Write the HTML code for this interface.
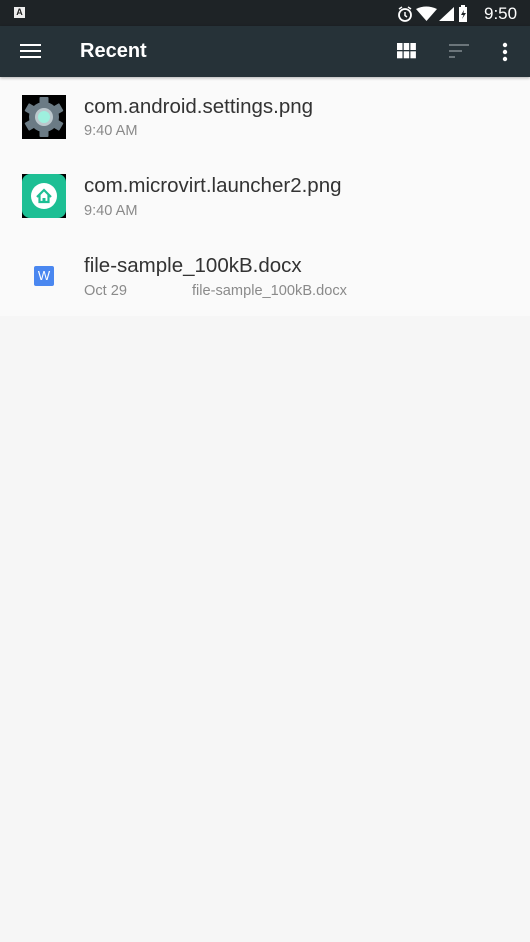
<!DOCTYPE html>
<html><head><style>
body{margin:0;width:530px;height:942px;background:#f6f6f6;font-family:"Liberation Sans",Roboto,sans-serif;position:relative;overflow:hidden}
.sb{position:absolute;left:0;top:0;width:530px;height:26px;background:#1e2326}
.tb{position:absolute;left:0;top:26px;width:530px;height:51px;background:#263238;box-shadow:0 1px 3px rgba(0,0,0,.3)}
.list{position:absolute;left:0;top:77px;width:530px;height:239px;background:#fafafa}
.t{position:absolute;left:84px;font-size:20.5px;color:#333}
.s{position:absolute;font-size:14.6px;color:#8a8a8a}
</style></head><body>
<div class="list"></div>
<div class="sb">
 <div style="position:absolute;left:14px;top:7px;width:11px;height:11px;background:#eee;font-size:9px;font-weight:bold;color:#222;text-align:center;line-height:11px">A</div>
 <svg style="position:absolute;left:396px;top:5px" width="120" height="18" viewBox="0 0 120 18">
  <circle cx="9" cy="10" r="6" fill="none" stroke="#fff" stroke-width="1.8"/><path d="M9 7v3.5l2 1.5" stroke="#fff" stroke-width="1.5" fill="none"/><path d="M3 4l3-2M15 4l-3-2" stroke="#fff" stroke-width="1.5"/>
  <path d="M20 4 Q30 -1 41 4 L30.5 16 Z" fill="#fff"/>
  <path d="M43 16 L58 2 L58 16 Z" fill="#fff"/>
  <rect x="63" y="2" width="8" height="15" fill="#fff"/><rect x="65" y="0" width="4" height="2" fill="#fff"/><path d="M68 5 L65 10 L67.5 10 L66 14 L70 8 L67.5 8 Z" fill="#1e2326"/>
 </svg>
 <div style="position:absolute;left:484px;top:4px;color:#fff;font-size:17px">9:50</div>
</div>
<div class="tb">
 <div style="position:absolute;left:20px;top:18px;width:21px;height:2px;background:#fff;box-shadow:0 6px 0 #fff,0 12px 0 #fff"></div>
 <div style="position:absolute;left:80px;top:14px;color:#fff;font-size:20px;font-weight:bold">Recent</div>
 <svg style="position:absolute;left:397px;top:17px" width="20" height="16"><g fill="#fff"><rect x="0" y="0" width="5.5" height="7"/><rect x="6.7" y="0" width="5.5" height="7"/><rect x="13.4" y="0" width="5.5" height="7"/><rect x="0" y="8.3" width="5.5" height="7"/><rect x="6.7" y="8.3" width="5.5" height="7"/><rect x="13.4" y="8.3" width="5.5" height="7"/></g></svg>
 <svg style="position:absolute;left:449px;top:18px" width="22" height="14"><g fill="#6b757a"><rect x="0" y="0" width="20" height="2"/><rect x="0" y="6" width="13" height="2"/><rect x="0" y="12" width="6" height="2"/></g></svg>
 <svg style="position:absolute;left:500px;top:16px" width="10" height="20"><g fill="#fff"><circle cx="5" cy="3" r="2.2"/><circle cx="5" cy="10" r="2.2"/><circle cx="5" cy="17" r="2.2"/></g></svg>
</div>
<svg style="position:absolute;left:22px;top:95px" width="44" height="44" viewBox="0 0 44 44">
 <rect width="44" height="44" fill="#000"/>
 <g fill="#6b7b85" transform="translate(22 22)">
  <circle r="15"/>
  <g id="g"><rect x="-4.5" y="-20" width="9" height="8" rx="1"/></g>
  <use href="#g" transform="rotate(60)"/><use href="#g" transform="rotate(120)"/><use href="#g" transform="rotate(180)"/><use href="#g" transform="rotate(240)"/><use href="#g" transform="rotate(300)"/>
 </g>
 <circle cx="22" cy="22" r="9" fill="#bcc8cd"/><circle cx="22" cy="22" r="6" fill="#9ef0de"/>
</svg>
<svg style="position:absolute;left:22px;top:174px" width="44" height="44" viewBox="0 0 44 44">
 <rect width="44" height="44" fill="#000"/><rect width="44" height="44" rx="8" fill="#1dbf94"/>
 <circle cx="22" cy="22" r="13" fill="#fff"/>
 <path d="M15 23 L22 16 L29 23 M17.5 21 V28 H26.5 V21" stroke="#1dbf94" stroke-width="2.2" fill="none"/><rect x="20.5" y="24" width="3" height="4" fill="#1dbf94"/>
</svg>
<div style="position:absolute;left:34px;top:266px;width:20px;height:20px;background:#4a87f0;border-radius:2px;color:#fff;font-size:13px;text-align:center;line-height:20px">W</div>
<div class="t" style="top:95px">com.android.settings.png</div>
<div class="s" style="left:84px;top:123px">9:40 AM</div>
<div class="t" style="top:174px">com.microvirt.launcher2.png</div>
<div class="s" style="left:84px;top:203px">9:40 AM</div>
<div class="t" style="top:254px">file-sample_100kB.docx</div>
<div class="s" style="left:84px;top:283px">Oct 29</div>
<div class="s" style="left:192px;top:283px">file-sample_100kB.docx</div>
</body></html>
